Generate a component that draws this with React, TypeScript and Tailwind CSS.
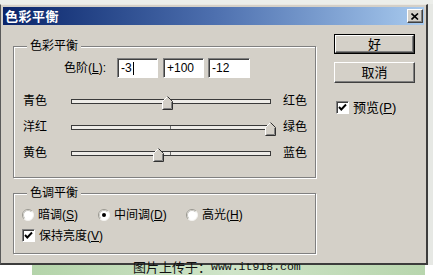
import React from "react";

const sliders = [
  { l: "青色", r: "红色", v: -3 },
  { l: "洋红", r: "绿色", v: 100 },
  { l: "黄色", r: "蓝色", v: -12 },
];

function Thumb({ left }: { left: number }) {
  return (
    <svg
      width="12"
      height="14"
      viewBox="0 0 12 14"
      className="absolute top-[-4px]"
      style={{ left }}
    >
      <path d="M0.5 13.5 V5.5 L5.5 0.5 L10.5 5.5 V13.5 Z" fill="#d4d0c8" />
      <path d="M0.5 13 V5.5 L5.5 0.5" fill="none" stroke="#ffffff" />
      <path d="M5.5 0.5 L10.5 5.5 V13.5 H0.5" fill="none" stroke="#303030" />
      <path d="M9.5 6 V12.5 H1.5" fill="none" stroke="#808080" />
    </svg>
  );
}

function Radio({ checked }: { checked?: boolean }) {
  return (
    <svg width="12" height="12" viewBox="0 0 12 12" className="shrink-0">
      <circle cx="6" cy="6" r="5.5" fill="#ffffff" />
      <path d="M2.1 9.9 A5.5 5.5 0 0 1 9.9 2.1" fill="none" stroke="#9a9890" />
      <path d="M2.8 9.2 A4.5 4.5 0 0 1 9.2 2.8" fill="none" stroke="#c8c6c0" />
      <path d="M9.9 2.1 A5.5 5.5 0 0 1 2.1 9.9" fill="none" stroke="#f4f3f0" />
      {checked && <circle cx="6" cy="6" r="2" fill="#000000" />}
    </svg>
  );
}

function Check() {
  return (
    <div className="w-[13px] h-[13px] shrink-0 bg-white border border-t-[#808080] border-l-[#808080] border-b-white border-r-white shadow-[inset_1px_1px_0_#404040] flex items-center justify-center">
      <svg width="9" height="9" viewBox="0 0 9 9">
        <path d="M1 4 L3.3 6.5 L8 1.5" fill="none" stroke="#000" strokeWidth="1.9" />
      </svg>
    </div>
  );
}

function Field({ w, text, caret }: { w: string; text: string; caret?: boolean }) {
  return (
    <div
      className={`${w} h-[20px] bg-white border border-t-[#808080] border-l-[#808080] border-b-white border-r-white shadow-[inset_1px_1px_0_#404040] flex items-center pl-[3px] text-[12px] leading-none`}
    >
      <span>{text}</span>
      {caret && <span className="w-px h-[13px] bg-black ml-px" />}
    </div>
  );
}

export default function App() {
  return (
    <div className="relative w-[433px] h-[275px] overflow-hidden bg-[#f2f4f0] font-['Liberation_Sans','Noto_Sans_CJK_SC',sans-serif] text-[12px] text-black">
      <div className="h-[4px] bg-[#eceeea]" />
      <div className="flex">
        <div className="w-[428px] h-[261px] bg-[#d4d0c8] border-l border-l-[#5a5a5a] border-t border-t-[#eae8e2] border-r-2 border-r-[#3c3c3c] border-b-2 border-b-[#3c3c3c] p-[2px] flex flex-col">
          {/* title bar */}
          <div className="h-[18px] bg-linear-to-r from-[#0a246a] via-[#4d6fae] to-[#a8caee] flex items-center justify-between pl-[2px] pr-[1px]">
            <span className="text-white font-bold text-[13px] leading-none tracking-[0.5px]">色彩平衡</span>
            <div className="w-[16px] h-[14px] bg-[#d4d0c8] border border-t-white border-l-white border-r-[#404040] border-b-[#404040] shadow-[inset_-1px_-1px_0_#808080] flex items-center justify-center">
              <svg width="8" height="7" viewBox="0 0 8 7">
                <path d="M0.5 0.5 L7 6.5 M7 0.5 L0.5 6.5" stroke="#000" strokeWidth="1.6" />
              </svg>
            </div>
          </div>

          {/* body */}
          <div className="flex items-start">
            {/* left column */}
            <div className="ml-[10px] mt-[21px] flex flex-col">
              {/* group 1 */}
              <div className="relative w-[303px] h-[132px] border border-[#808080] shadow-[inset_1px_1px_0_#fff,1px_1px_0_#fff] flex flex-col">
                <span className="absolute left-[13px] top-[-9px] px-[3px] bg-[#d4d0c8] leading-[16px]">色彩平衡</span>
                <div className="mt-[11px] pl-[50px] flex items-center h-[20px]">
                  <span className="w-[53px] leading-none">
                    色阶(<span className="underline">L</span>):
                  </span>
                  <Field w="w-[41px]" text="-3" caret />
                  <div className="w-[5px]" />
                  <Field w="w-[41px]" text="+100" />
                  <div className="w-[4px]" />
                  <Field w="w-[42px]" text="-12" />
                </div>
                <div className="mt-[10px] flex flex-col">
                  {sliders.map((s) => (
                    <div key={s.l} className="h-[26px] flex items-center pl-[9px]">
                      <span className="w-[48px] leading-none">{s.l}</span>
                      <div className="relative w-[200px] h-[5px] border border-[#3a3a3a] bg-[#eeece8]">
                        <div className="absolute left-[98px] top-0 bottom-0 w-px bg-[#707070]" />
                        <Thumb left={71 + ((s.v + 100) / 200) * 199 - 72 - 5.5} />
                      </div>
                      <span className="ml-[12px] leading-none">{s.r}</span>
                    </div>
                  ))}
                </div>
              </div>

              {/* group 2 */}
              <div className="relative mt-[15px] w-[303px] h-[61px] border border-[#808080] shadow-[inset_1px_1px_0_#fff,1px_1px_0_#fff] flex flex-col">
                <span className="absolute left-[13px] top-[-9px] px-[3px] bg-[#d4d0c8] leading-[16px]">色调平衡</span>
                <div className="mt-[15px] pl-[8px] flex items-center h-[12px]">
                  <div className="w-[76px] flex items-center gap-[4px]">
                    <Radio />
                    <span className="leading-none">
                      暗调(<span className="underline">S</span>)
                    </span>
                  </div>
                  <div className="w-[88px] flex items-center gap-[4px]">
                    <Radio checked />
                    <span className="leading-none">
                      中间调(<span className="underline">D</span>)
                    </span>
                  </div>
                  <div className="flex items-center gap-[4px]">
                    <Radio />
                    <span className="leading-none">
                      高光(<span className="underline">H</span>)
                    </span>
                  </div>
                </div>
                <div className="mt-[8px] pl-[8px] flex items-center gap-[4px]">
                  <Check />
                  <span className="leading-none">
                    保持亮度(<span className="underline">V</span>)
                  </span>
                </div>
              </div>
            </div>

            {/* right column */}
            <div className="ml-[18px] mt-[9px] flex flex-col">
              <div className="w-[81px] h-[20px] border border-black">
                <div className="w-full h-full bg-[#d4d0c8] border border-t-white border-l-white border-r-[#404040] border-b-[#404040] shadow-[inset_-1px_-1px_0_#808080] flex items-center justify-center leading-none text-[13px]">
                  好
                </div>
              </div>
              <div className="mt-[8px] w-[81px] h-[21px] bg-[#d4d0c8] border border-t-white border-l-white border-r-[#404040] border-b-[#404040] shadow-[inset_-1px_-1px_0_#808080] flex items-center justify-center leading-none text-[13px]">
                取消
              </div>
              <div className="mt-[18px] ml-[2px] flex items-center gap-[4px]">
                <Check />
                <span className="leading-none text-[13px]">
                  预览(<span className="underline">P</span>)
                </span>
              </div>
            </div>
          </div>
        </div>
        <div className="flex-1 bg-[#e6e8e4]" />
      </div>
      <div className="h-[10px] flex">
        <div className="w-[32px] bg-white" />
        <div className="flex-1 bg-linear-to-r from-[#b4d4aa] via-[#cfe4c8] to-[#b8d6ae]" />
        <div className="w-[8px] bg-white" />
      </div>
      <div className="absolute left-[133px] top-[259px] h-[15px] flex items-center text-[#111]">
        <span className="text-[13px] leading-[15px] font-['Noto_Sans_CJK_SC',sans-serif]">图片上传于：</span>
        <span className="text-[11.5px] leading-[15px] font-['Liberation_Mono',monospace]">www.it918.com</span>
      </div>
    </div>
  );
}
